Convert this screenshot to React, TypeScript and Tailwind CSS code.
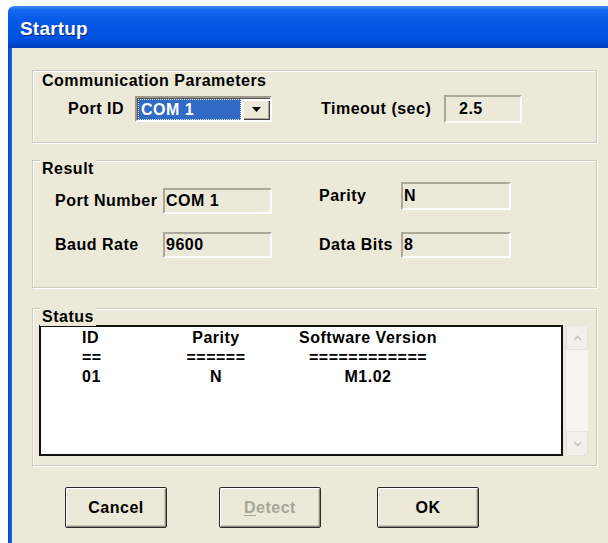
const FACE = "bg-[#ece9d8]";
const TEXT = "font-['Liberation_Sans',Arial,sans-serif] text-[16px] font-bold tracking-[0.5px] text-black";

function GroupBox({
  title,
  labelPos,
  className,
  children,
}: {
  title: string;
  labelPos: string;
  className: string;
  children: React.ReactNode;
}) {
  return (
    <div
      className={`relative w-[565px] border border-[#cfccbc] shadow-[inset_1px_1px_0_#fff,1px_1px_0_#fff] ${className}`}
    >
      <span className={`absolute left-[7px] ${labelPos} ${FACE} px-[2px] leading-[18px] ${TEXT}`}>{title}</span>
      {children}
    </div>
  );
}

function ReadOnlyField({ value, className }: { value: string; className: string }) {
  return (
    <div
      className={`flex items-center border-2 border-t-[#aca899] border-l-[#aca899] border-r-white border-b-white ${FACE} leading-[18px] ${TEXT} ${className}`}
    >
      {value}
    </div>
  );
}

function ComboBox() {
  return (
    <div className="flex h-[26px] w-[137px] items-center border-2 border-t-[#9d9a8b] border-l-[#9d9a8b] border-r-white border-b-white bg-white shadow-[inset_1px_1px_0_#555]">
      <div className="ml-[1px] mt-[1px] flex h-[21px] w-[103px] items-center border border-dotted border-[#e8e8e8] bg-[#316ac5] pl-[2px]">
        <span className={`${TEXT} text-white leading-[18px]`}>COM 1</span>
      </div>
      <div className="ml-[2px] mt-[1px] flex h-[20px] w-[27px] items-center justify-center bg-[#ece9d8] shadow-[inset_1px_1px_0_#fff,inset_-1px_-1px_0_#404040,inset_-2px_-2px_0_#aca899]">
        <svg width="9" height="5" viewBox="0 0 9 5">
          <path d="M0 0h9L4.5 5z" fill="#000" />
        </svg>
      </div>
    </div>
  );
}

function Chevron({ up }: { up: boolean }) {
  return (
    <div className="flex h-[25px] w-[22px] items-center justify-center rounded-[2px] border border-[#e4e3d9] bg-[#f1f0ea]">
      <svg width="9" height="6" viewBox="0 0 9 6">
        <path
          d={up ? "M1 5l3.5-3.5L8 5" : "M1 1l3.5 3.5L8 1"}
          fill="none"
          stroke="#c7c5b9"
          strokeWidth="1.6"
        />
      </svg>
    </div>
  );
}

function Button({ label, disabled, className }: { label: string; disabled?: boolean; className: string }) {
  return (
    <button
      className={`flex h-[41px] w-[102px] items-center justify-center rounded-[2px] border border-[#2a2a2a] ${FACE} shadow-[inset_1px_1px_0_#fff,inset_-1px_-1px_0_#8e8b7d,inset_-2px_-2px_0_#cac7b7] ${TEXT} ${className}`}
    >
      {disabled ? (
        <span className="text-[#a7a597]">
          <span className="underline underline-offset-[2px]">D</span>etect
        </span>
      ) : (
        label
      )}
    </button>
  );
}

const STATUS_ROWS = [
  ["ID", "Parity", "Software Version"],
  ["==", "======", "============"],
  ["01", "N", "M1.02"],
];

export default function App() {
  return (
    <div className="h-[543px] w-[608px] overflow-hidden bg-white pl-[8px] pt-[6px]">
      <div className="flex h-full flex-col">
        {/* title bar */}
        <div className="flex h-[42px] shrink-0 items-center rounded-tl-[6px] bg-[linear-gradient(to_bottom,#3f8ff7_0%,#1267ee_10%,#0558e6_35%,#0053e2_75%,#0049d4_90%,#003cbc_100%)] pl-[12px] pt-[5px]">
          <span className="font-['Liberation_Sans',Arial,sans-serif] text-[19px] font-bold tracking-[0.2px] text-white [text-shadow:1px_1px_0_#0a2a8a]">
            Startup
          </span>
        </div>

        <div className="flex flex-1">
          <div className="w-[4px] bg-[linear-gradient(to_right,#0a43c6,#1c62ec)]" />

          <div className={`flex flex-1 flex-col ${FACE} pl-[20px] pt-[22px]`}>
            <GroupBox title="Communication Parameters" labelPos="top-[1px]" className="h-[73px]">
              <div className="flex items-center pl-[35px] pt-[24px]">
                <span className={`w-[67px] leading-[18px] ${TEXT}`}>Port ID</span>
                <ComboBox />
                <span className={`ml-[49px] w-[123px] leading-[18px] ${TEXT}`}>Timeout (sec)</span>
                <ReadOnlyField value="2.5" className="h-[28px] w-[78px] pl-[13px]" />
              </div>
            </GroupBox>

            <GroupBox title="Result" labelPos="-top-px" className="mt-[17px] h-[128px]">
              <div className="flex">
                <div className="flex flex-col gap-[18px] pl-[22px] pt-[27px]">
                  <div className="flex items-center">
                    <span className={`w-[108px] leading-[18px] ${TEXT}`}>Port Number</span>
                    <ReadOnlyField value="COM 1" className="h-[26px] w-[109px] pl-[1px]" />
                  </div>
                  <div className="flex items-center">
                    <span className={`w-[108px] leading-[18px] ${TEXT}`}>Baud Rate</span>
                    <ReadOnlyField value="9600" className="h-[26px] w-[109px] pl-[1px]" />
                  </div>
                </div>
                <div className="ml-[47px] flex flex-col gap-[22px] pt-[21px]">
                  <div className="flex items-center">
                    <span className={`w-[82px] leading-[18px] ${TEXT}`}>Parity</span>
                    <ReadOnlyField value="N" className="h-[28px] w-[110px] pl-[1px]" />
                  </div>
                  <div className="flex items-center">
                    <span className={`w-[82px] leading-[18px] ${TEXT}`}>Data Bits</span>
                    <ReadOnlyField value="8" className="h-[26px] w-[110px] pl-[1px]" />
                  </div>
                </div>
              </div>
            </GroupBox>

            <GroupBox title="Status" labelPos="-top-px" className="mt-[20px] h-[158px]">
              <div className="flex pl-[6px] pt-[16px]">
                <div className="h-[131px] w-[524px] border-2 border-[#111] bg-white pt-[1px]">
                  {STATUS_ROWS.map((row) => (
                    <div key={row[0]} className={`grid grid-cols-[74px_120px_184px] pl-[41px] leading-[19.5px] ${TEXT}`}>
                      <span>{row[0]}</span>
                      <span className="text-center">{row[1]}</span>
                      <span className="text-center">{row[2]}</span>
                    </div>
                  ))}
                </div>
                <div className="ml-[3px] flex h-[131px] w-[22px] flex-col justify-between bg-[#f6f5f0]">
                  <Chevron up />
                  <Chevron up={false} />
                </div>
              </div>
            </GroupBox>

            <div className="mt-[21px] flex pl-[33px]">
              <Button label="Cancel" className="" />
              <Button label="Detect" disabled className="ml-[52px]" />
              <Button label="OK" className="ml-[56px]" />
            </div>
          </div>
        </div>
      </div>
    </div>
  );
}
